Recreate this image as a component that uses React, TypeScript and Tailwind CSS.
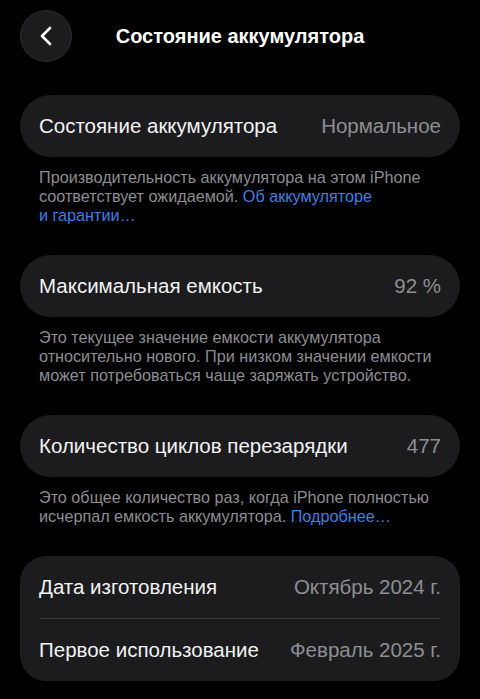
import React from "react";

const font = { fontFamily: '"Liberation Sans", Arial, sans-serif' };

const Row = ({ label, value }: { label: string; value: string }) => (
  <div className="flex h-[62px] items-center justify-between px-[19px]">
    <span className="text-[20.5px] text-[#f2f2f4]">{label}</span>
    <span className="text-[20.5px] text-[#8e8e93]">{value}</span>
  </div>
);

const Note = ({ children }: { children: React.ReactNode }) => (
  <p className="mt-[11px] px-[19px] text-[16.2px] leading-[19px] text-[#8d8d92]">
    {children}
  </p>
);

const Link = ({ children }: { children: React.ReactNode }) => (
  <span className="text-[#3e7fe0]">{children}</span>
);

export default function App() {
  return (
    <div className="min-h-[699px] w-[480px] bg-black px-5 pt-[10px]" style={font}>
      <div className="grid h-[52px] grid-cols-[52px_1fr_52px] items-center">
        <button className="flex h-[52px] w-[52px] items-center justify-center rounded-full border border-[#2e2e30] bg-[#1c1c1e]">
          <svg width="14" height="20" viewBox="0 0 14 20" fill="none">
            <path
              d="M11 2L3 10L11 18"
              stroke="white"
              strokeWidth="2.6"
              strokeLinecap="round"
              strokeLinejoin="round"
            />
          </svg>
        </button>
        <h1 className="text-center text-[20px] font-bold text-white">
          Состояние аккумулятора
        </h1>
        <div />
      </div>

      <div className="mt-[33px] rounded-full bg-[#1c1c1e]">
        <Row label="Состояние аккумулятора" value="Нормальное" />
      </div>
      <Note>
        Производительность аккумулятора на этом iPhone соответствует ожидаемой.{" "}
        <Link>
          Об аккумуляторе
          <br />и гарантии…
        </Link>
      </Note>

      <div className="mt-[30px] rounded-full bg-[#1c1c1e]">
        <Row label="Максимальная емкость" value="92 %" />
      </div>
      <Note>
        Это текущее значение емкости аккумулятора относительно нового. При
        низком значении емкости может потребоваться чаще заряжать устройство.
      </Note>

      <div className="mt-[30px] rounded-full bg-[#1c1c1e]">
        <Row label="Количество циклов перезарядки" value="477" />
      </div>
      <Note>
        Это общее количество раз, когда iPhone полностью исчерпал емкость
        аккумулятора. <Link>Подробнее…</Link>
      </Note>

      <div className="mt-[30px] rounded-[26px] bg-[#1c1c1e]">
        <Row label="Дата изготовления" value="Октябрь 2024 г." />
        <div className="mx-[19px] h-px bg-[#38383a]" />
        <Row label="Первое использование" value="Февраль 2025 г." />
      </div>
    </div>
  );
}
